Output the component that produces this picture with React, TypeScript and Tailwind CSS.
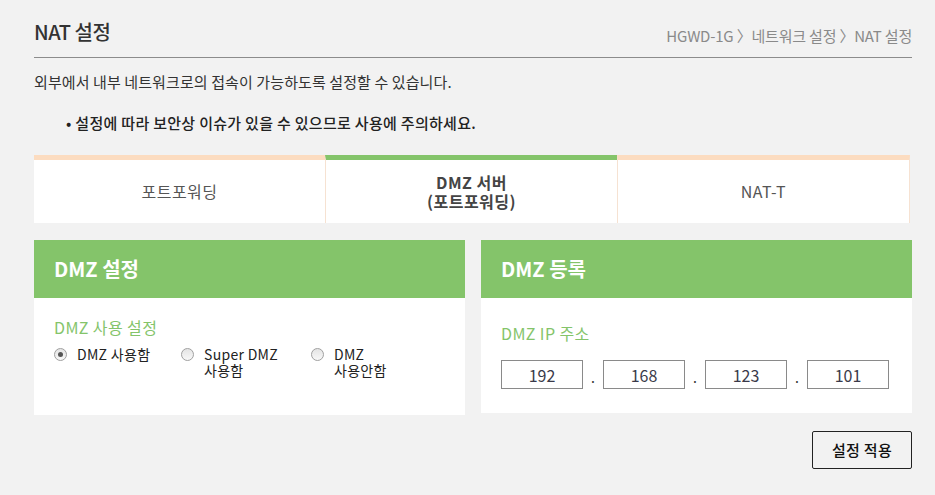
import { FC } from "react";

const font = { fontFamily: '"Noto Sans CJK KR", "Noto Sans", sans-serif' };

const Radio: FC<{ checked?: boolean }> = ({ checked }) => (
  <span className="mt-[2px] flex h-[13px] w-[13px] shrink-0 items-center justify-center rounded-full border border-[#a0a0a0] bg-gradient-to-b from-[#e4e4e4] to-[#f8f8f8]">
    {checked && <span className="h-[5px] w-[5px] rounded-full bg-[#555]" />}
  </span>
);

const IpBox: FC<{ value: string }> = ({ value }) => (
  <div className="flex h-[29px] w-[82px] items-center justify-center border border-[#8a8a8a] bg-white text-[16px] text-[#3a3a4a]">
    {value}
  </div>
);

const Dot = () => <span className="w-[20px] pb-[1px] text-center text-[14px] text-[#333]">.</span>;

const Option: FC<{ lines: string[]; checked?: boolean; width?: string }> = ({ lines, checked, width }) => (
  <div className={`flex gap-[10px] ${width ?? ""}`}>
    <Radio checked={checked} />
    <div className="flex flex-col">
      {lines.map((l) => (
        <span key={l} className="block h-[16px] leading-[16px]">
          {l}
        </span>
      ))}
    </div>
  </div>
);

const App: FC = () => {
  const tabs = [
    { label: "포트포워딩", active: false },
    { label: "DMZ 서버\n(포트포워딩)", active: true },
    { label: "NAT-T", active: false },
  ];

  return (
    <div className="min-h-[495px] w-[935px] bg-[#f2f2f2] pl-[34px] pr-[23px] pt-[17px]" style={font}>
      <div className="flex items-end justify-between border-b border-[#8c8c8c] pb-[10px]">
        <h1 className="text-[20px] font-medium tracking-[-0.5px] text-[#333]">NAT 설정</h1>
        <p className="text-[15px] tracking-[-0.2px] text-[#8a8a8a]">
          HGWD-1G 〉네트워크 설정 〉NAT 설정
        </p>
      </div>

      <p className="mt-[14px] text-[15px] leading-[20px] tracking-[0.1px] text-[#333]">
        외부에서 내부 네트워크로의 접속이 가능하도록 설정할 수 있습니다.
      </p>
      <p className="mt-[21px] pl-[32px] text-[15px] font-medium leading-[20px] tracking-[0.3px] text-[#222]">
        • 설정에 따라 보안상 이슈가 있을 수 있으므로 사용에 주의하세요.
      </p>

      <div className="mt-[22px] flex w-[876px]">
        {tabs.map((t, i) => (
          <div
            key={i}
            className={`flex h-[68px] flex-1 items-center justify-center whitespace-pre-line border-t-[5px] bg-white text-center text-[16px] leading-[19px] tracking-[0.5px] ${
              t.active ? "border-t-[#84c46a] font-bold text-[#444]" : "border-t-[#fcdcc0] text-[#555]"
            } ${i > 0 ? "border-l border-l-[#f6e2d2]" : ""} ${i === 2 ? "border-r border-r-[#f6e2d2]" : ""}`}
          >
            {t.label}
          </div>
        ))}
      </div>

      <div className="mt-[17px] flex gap-[16px]">
        <div className="h-[175px] w-[431px] bg-white">
          <div className="flex h-[58px] items-center bg-[#84c46a] px-[20px] text-[20px] font-bold text-white">
            DMZ 설정
          </div>
          <div className="px-[20px] pt-[19px]">
            <p className="text-[16px] leading-[20px] tracking-[0.4px] text-[#84c46a]">DMZ 사용 설정</p>
            <div className="mt-[9px] flex text-[14px] tracking-[0.3px] text-[#222]">
              <Option lines={["DMZ 사용함"]} checked width="w-[127px]" />
              <Option lines={["Super DMZ", "사용함"]} width="w-[130px]" />
              <Option lines={["DMZ", "사용안함"]} />
            </div>
          </div>
        </div>

        <div className="h-[173px] w-[431px] bg-white">
          <div className="flex h-[58px] items-center bg-[#84c46a] px-[20px] text-[20px] font-bold text-white">
            DMZ 등록
          </div>
          <div className="px-[20px] pt-[25px]">
            <p className="text-[16px] leading-[20px] tracking-[0.4px] text-[#84c46a]">DMZ IP 주소</p>
            <div className="mt-[17px] flex items-end">
              <IpBox value="192" />
              <Dot />
              <IpBox value="168" />
              <Dot />
              <IpBox value="123" />
              <Dot />
              <IpBox value="101" />
            </div>
          </div>
        </div>
      </div>

      <div className="mt-[16px] flex justify-end">
        <button className="h-[38px] w-[100px] rounded-[2px] border border-[#222] bg-[#f2f2f2] text-[15px] font-medium tracking-[0.3px] text-[#111]">
          설정 적용
        </button>
      </div>
    </div>
  );
};

export default App;
